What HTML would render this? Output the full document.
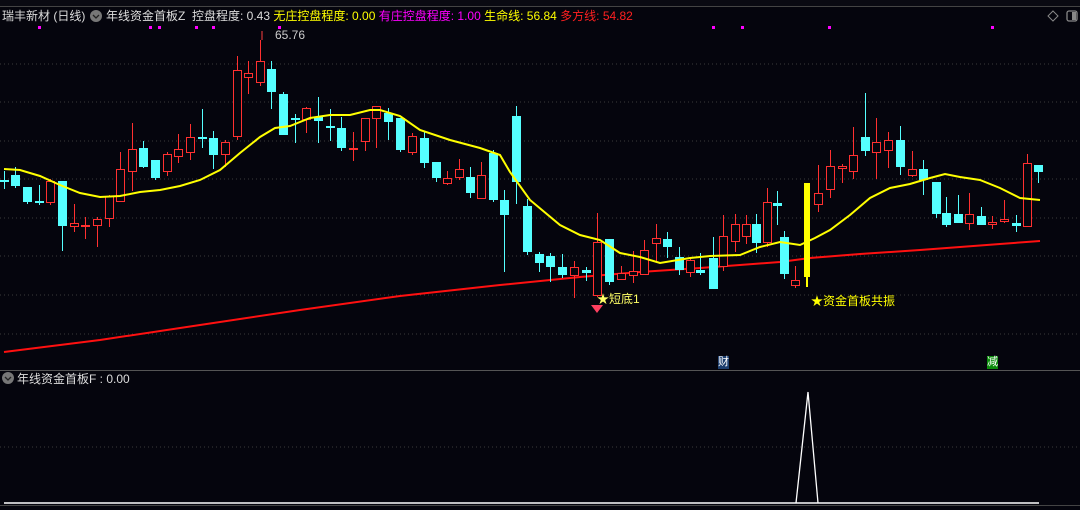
<!DOCTYPE html>
<html><head><meta charset="utf-8"><style>
body{margin:0;background:#05050d;width:1080px;height:510px;overflow:hidden;position:relative;font-family:"Liberation Sans","Noto Sans CJK SC",sans-serif;}
.t{position:absolute;font-size:12px;white-space:nowrap;line-height:14px}
</style></head><body>
<svg id="s" width="1080" height="510" style="position:absolute;left:0;top:0" xmlns="http://www.w3.org/2000/svg">
<rect x="0" y="0" width="1080" height="6" fill="#0a0a12"/>
<line x1="0" y1="6.5" x2="1080" y2="6.5" stroke="#444"/>
<g stroke="#3a3a3a" stroke-dasharray="1,3">
<line x1="0" y1="64" x2="1080" y2="64"/><line x1="0" y1="102" x2="1080" y2="102"/><line x1="0" y1="141" x2="1080" y2="141"/><line x1="0" y1="179" x2="1080" y2="179"/><line x1="0" y1="218" x2="1080" y2="218"/><line x1="0" y1="256" x2="1080" y2="256"/><line x1="0" y1="295" x2="1080" y2="295"/><line x1="0" y1="334" x2="1080" y2="334"/><line x1="0" y1="447" x2="1080" y2="447"/>
</g>
<line x1="0" y1="370.5" x2="1080" y2="370.5" stroke="#555"/>
<line x1="0" y1="505.5" x2="1080" y2="505.5" stroke="#444"/>
<line x1="4" y1="503" x2="1039" y2="503" stroke="#fff" stroke-width="1.5"/>
<polyline points="796,503 808,392 818,503" fill="none" stroke="#fff" stroke-width="1.3"/>
<g fill="#ff00ff"><rect x="38" y="26" width="3" height="3"/><rect x="149" y="26" width="3" height="3"/><rect x="158" y="26" width="3" height="3"/><rect x="195" y="26" width="3" height="3"/><rect x="212" y="26" width="3" height="3"/><rect x="278" y="26" width="3" height="3"/><rect x="712" y="26" width="3" height="3"/><rect x="741" y="26" width="3" height="3"/><rect x="828" y="26" width="3" height="3"/><rect x="991" y="26" width="3" height="3"/></g>
<polyline fill="none" stroke="#ff1010" stroke-width="2" points="4,352 100,340 200,325 300,310 400,296 500,285 580,277 640,272 700,268 780,262 810,258 860,254 920,250 1000,244 1040,241"/>
<g id="c"></g>
<polyline fill="none" stroke="#ffff00" stroke-width="2" points="4,169 20,170 40,176 60,185 80,193 100,197 120,196 140,192 160,190 180,186 200,180 220,170 240,153 260,137 275,128 290,126 310,118 330,115 350,115 370,110 380,110 400,116 420,130 450,140 480,148 500,155 510,172 530,200 560,225 580,235 600,240 620,253 640,257 660,263 690,258 710,256 740,255 760,247 780,242 800,245 815,238 830,230 850,215 870,198 890,188 910,184 930,178 945,174 960,177 980,180 1000,188 1020,198 1040,200"/>
<rect x="804" y="183" width="6" height="94" fill="#ffff00"/><line x1="807" y1="277" x2="807" y2="287" stroke="#ffff00" stroke-width="2"/>
<path d="M591,305 h12 l-6,8 z" fill="#ff4060"/>
<line x1="262" y1="31" x2="262" y2="40" stroke="#ff4040"/>
<circle cx="8" cy="378" r="6" fill="#777"/><path d="M5,377 l3,3 l3,-3" stroke="#222" fill="none" stroke-width="1.3"/>
<circle cx="96" cy="16" r="6" fill="#777"/><path d="M93,15 l3,3 l3,-3" stroke="#222" fill="none" stroke-width="1.3"/>
<path d="M1053,11 l5,5 l-5,5 l-5,-5 z" fill="none" stroke="#888"/>
<rect x="1067" y="11" width="10" height="10" rx="2" fill="none" stroke="#888" stroke-width="1.3"/><rect x="1072" y="12" width="4" height="8" fill="#888"/>
</svg>
<div class="t" style="left:2px;top:9px;color:#ddd">瑞丰新材 (日线)</div>
<div class="t" style="left:106px;top:9px;color:#ddd">年线资金首板Z&nbsp; 控盘程度: 0.43 <span style="color:#ffff00">无庄控盘程度: 0.00</span> <span style="color:#ff00ff">有庄控盘程度: 1.00</span> <span style="color:#ffff00">生命线: 56.84</span> <span style="color:#ff2020">多方线: 54.82</span></div>
<div class="t" style="left:275px;top:28px;color:#ccc">65.76</div>
<div class="t" style="left:597px;top:292px;color:#ffff66">★短底1</div>
<div class="t" style="left:811px;top:294px;color:#ffff00">★资金首板共振</div>
<div class="t" style="left:718px;top:356px;color:#fff;background:#1c3e6e;font-size:11px;line-height:13px">财</div>
<div class="t" style="left:987px;top:356px;color:#fff;background:#0a8a0a;font-size:11px;line-height:13px">减</div>
<div class="t" style="left:17px;top:372px;color:#ddd">年线资金首板F : 0.00</div>
<script>
var d=[[4,180,180,171,189,0],[15,175,186,167,188,0],[27,187,202,187,204,0],[39,201,201,185,205,0],[50,181,202,179,205,1],[62,181,226,181,251,0],[74,223,226,204,232,1],[85,225,225,217,239,1],[97,219,225,217,247,1],[109,196,218,195,227,1],[120,169,201,152,201,1],[132,149,171,123,191,1],[143,148,167,141,168,0],[155,160,178,160,180,0],[167,154,171,152,176,1],[178,149,156,134,163,1],[190,137,152,124,160,1],[202,137,137,109,148,0],[213,138,155,131,169,0],[225,142,154,140,167,1],[237,70,136,56,140,1],[248,73,77,61,94,1],[260,61,82,40,86,1],[271,69,92,61,109,0],[283,94,135,92,135,0],[295,118,119,114,143,0],[306,108,119,107,133,1],[318,117,121,97,143,0],[330,126,126,109,141,0],[341,128,148,117,151,0],[353,148,148,132,161,1],[365,118,141,118,151,1],[376,106,118,106,148,1],[388,113,122,108,140,0],[400,118,150,118,152,0],[412,136,152,133,155,1],[424,138,163,132,168,0],[436,162,178,162,182,0],[447,178,183,171,185,1],[459,169,177,159,180,1],[470,177,193,167,198,0],[481,175,198,162,198,1],[493,153,200,150,202,0],[504,200,215,190,272,0],[516,116,182,106,204,0],[527,206,252,199,255,0],[539,254,263,252,272,0],[550,256,267,253,282,0],[562,267,275,254,278,0],[574,267,275,261,298,1],[586,270,273,267,281,0],[597,242,295,213,297,1],[609,239,282,239,285,0],[621,273,279,266,280,1],[633,271,275,251,283,1],[644,250,274,240,275,1],[656,238,243,224,262,1],[667,239,247,232,258,0],[679,257,270,247,275,0],[690,260,272,258,277,1],[700,270,273,253,275,0],[713,258,289,237,289,0],[723,236,266,215,271,1],[735,224,241,214,252,1],[746,224,236,215,244,1],[756,224,243,214,253,0],[767,202,242,188,247,1],[777,203,206,191,225,0],[784,237,274,231,279,0],[795,280,285,266,288,1],[818,193,204,165,212,1],[830,166,189,150,198,1],[842,166,168,164,183,1],[853,155,171,127,179,1],[865,137,151,93,156,0],[876,142,152,118,179,1],[888,140,150,132,168,1],[900,140,167,126,175,0],[912,169,175,151,177,1],[923,169,180,160,195,0],[936,182,214,182,218,0],[946,213,225,197,227,0],[958,214,223,195,223,0],[969,214,223,193,230,1],[981,216,225,207,225,0],[992,222,224,216,229,1],[1004,219,221,200,223,1],[1016,223,226,215,232,0],[1027,163,226,154,226,1],[1038,165,172,165,183,0]];
var h='';d.forEach(function(c){var x=c[0],t=c[1],b=c[2],col=c[5]?'#ff3030':'#55ffff';
h+='<line x1="'+(x+.5)+'" y1="'+c[3]+'" x2="'+(x+.5)+'" y2="'+c[4]+'" stroke="'+col+'"/>';
var hh=Math.max(b-t,1);
if(c[5])h+='<rect x="'+(x-3.5)+'" y="'+(t+.5)+'" width="8" height="'+hh+'" fill="#05050d" stroke="'+col+'"/>';
else h+='<rect x="'+(x-4)+'" y="'+t+'" width="9" height="'+(hh<2?2:hh)+'" fill="'+col+'"/>';});
document.getElementById('c').innerHTML=h;
</script>
</body></html>
